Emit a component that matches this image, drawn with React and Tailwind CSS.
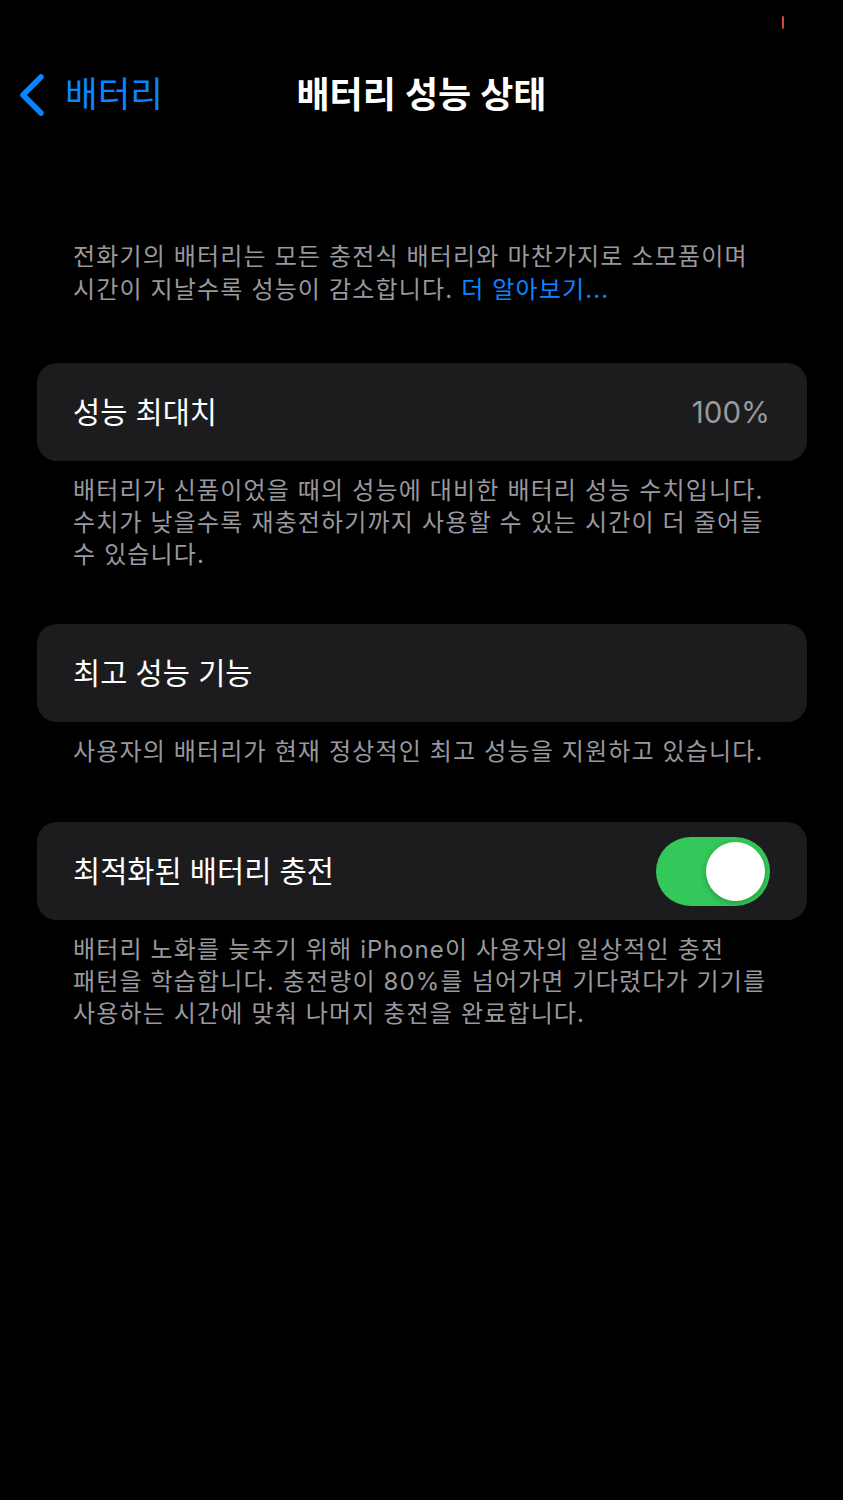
import React, { useState } from "react";

// ─── Battery Health settings page (dark iOS style) ───────────────────────────
const font = "font-['Inter','Noto_Sans_CJK_KR',sans-serif]";

function Chevron() {
  return (
    <svg width="30" height="44" viewBox="0 0 30 44" fill="none">
      <polyline
        points="23,4 5,22 23,40"
        stroke="#0a84ff"
        strokeWidth="5.5"
        strokeLinecap="round"
        strokeLinejoin="round"
      />
    </svg>
  );
}

function Toggle({ on, onChange }) {
  return (
    <button
      type="button"
      onClick={() => onChange(!on)}
      className={`flex h-[69px] w-[114px] items-center rounded-full p-[5px] transition ${
        on ? "justify-end bg-[#34c759]" : "justify-start bg-[#39393d]"
      }`}
    >
      <span className="block h-[59px] w-[59px] rounded-full bg-white shadow-[0_2px_6px_rgba(0,0,0,0.25)]" />
    </button>
  );
}

function Card({ children }) {
  return (
    <div className="flex h-[98px] items-center justify-between rounded-[20px] bg-[#1c1c1e] pl-[36px] pr-[37px]">
      {children}
    </div>
  );
}

function Footer({ lines }) {
  return (
    <div className="mt-[14px] px-[36px] text-[24px] leading-[32px] tracking-[1.15px] text-[#98989e]">
      {lines.map((l) => (
        <p key={l} className="whitespace-nowrap">{l}</p>
      ))}
    </div>
  );
}

export default function App() {
  const [optimized, setOptimized] = useState(true);

  return (
    <div className={`min-h-[1500px] w-full bg-black ${font}`}>
      {/* status bar */}
      <div className="flex h-[50px] justify-end pr-[59px]">
        <span className="mt-[16px] block h-[13px] w-[2px] rounded-full bg-[#d2433c]" />
      </div>

      {/* navigation bar */}
      <div className="grid h-[90px] grid-cols-[1fr_auto_1fr] items-center px-[18px]">
        <div className="flex items-center gap-[17px]">
          <Chevron />
          <span className="text-[35.5px] leading-none text-[#0a84ff]">배터리</span>
        </div>
        <h1 className="text-[36px] font-semibold leading-none text-white">
          배터리 성능 상태
        </h1>
        <div />
      </div>

      <div className="pl-[37px] pr-[36px]">
        {/* intro */}
        <div className="mt-[100px] px-[36px] text-[24px] leading-[33px] tracking-[1.15px] text-[#98989e]">
          <p className="whitespace-nowrap">전화기의 배터리는 모든 충전식 배터리와 마찬가지로 소모품이며</p>
          <p className="whitespace-nowrap">
            시간이 지날수록 성능이 감소합니다. <span className="text-[#0a84ff]">더 알아보기...</span>
          </p>
        </div>

        {/* peak capacity */}
        <div className="mt-[57px]">
          <Card>
            <span className="text-[29.5px] text-white">성능 최대치</span>
            <span className="text-[29.5px] text-[#98989e]">100%</span>
          </Card>
          <Footer
            lines={[
              "배터리가 신품이었을 때의 성능에 대비한 배터리 성능 수치입니다.",
              "수치가 낮을수록 재충전하기까지 사용할 수 있는 시간이 더 줄어들",
              "수 있습니다.",
            ]}
          />
        </div>

        {/* peak performance capability */}
        <div className="mt-[53px]">
          <Card>
            <span className="text-[29.5px] text-white">최고 성능 기능</span>
          </Card>
          <Footer lines={["사용자의 배터리가 현재 정상적인 최고 성능을 지원하고 있습니다."]} />
        </div>

        {/* optimized charging */}
        <div className="mt-[54px]">
          <Card>
            <span className="text-[29.5px] text-white">최적화된 배터리 충전</span>
            <Toggle on={optimized} onChange={setOptimized} />
          </Card>
          <Footer
            lines={[
              "배터리 노화를 늦추기 위해 iPhone이 사용자의 일상적인 충전",
              "패턴을 학습합니다. 충전량이 80%를 넘어가면 기다렸다가 기기를",
              "사용하는 시간에 맞춰 나머지 충전을 완료합니다.",
            ]}
          />
        </div>
      </div>
    </div>
  );
}
